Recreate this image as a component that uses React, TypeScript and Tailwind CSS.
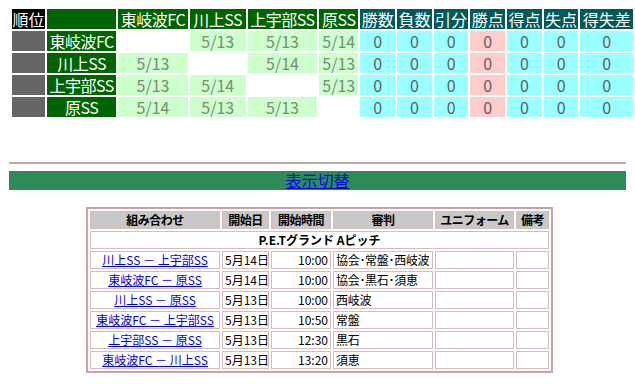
import React from 'react';

const TEAMS = ["東岐波FC", "川上SS", "上宇部SS", "原SS"];

// 対戦日 (行: チーム, 列: 相手)
const DATES: (string | null)[][] = [
  [null, "5/13", "5/13", "5/14"],
  ["5/13", null, "5/14", "5/13"],
  ["5/13", "5/14", null, "5/13"],
  ["5/14", "5/13", "5/13", null],
];

const TEAM_W = ["w-[70px]", "w-[57px]", "w-[70px]", "w-[40px]"];
const STATS = ["勝数", "負数", "引分", "勝点", "得点", "失点", "得失差"];

const MATCHES = [
  { card: "川上SS － 上宇部SS", date: "5月14日", time: "10:00", ref: "協会･常盤･西岐波" },
  { card: "東岐波FC － 原SS", date: "5月14日", time: "10:00", ref: "協会･黒石･須恵" },
  { card: "川上SS － 原SS", date: "5月13日", time: "10:00", ref: "西岐波" },
  { card: "東岐波FC － 上宇部SS", date: "5月13日", time: "10:50", ref: "常盤" },
  { card: "上宇部SS － 原SS", date: "5月13日", time: "12:30", ref: "黒石" },
  { card: "東岐波FC － 川上SS", date: "5月13日", time: "13:20", ref: "須恵" },
];

const cell = "border border-[#d8bcbc] h-[18px] p-0 px-[2px] text-[12px] leading-[16px] whitespace-nowrap overflow-hidden";
const head = `${cell} bg-[#c8c8c8] font-bold tracking-[-0.5px]`;

export default function App() {
  return (
    <div className="min-h-screen bg-white text-black font-['Noto_Sans_CJK_JP',sans-serif]">
      {/* 星取表 */}
      <table className="ml-[10px] mt-[7px] border-separate border-spacing-[2px] text-[16px] leading-[20px]">
        <thead>
          <tr className="h-[20px]">
            <th className="w-[35px] p-0 bg-black text-white font-normal">順位</th>
            <th className="w-[70px] p-0 bg-[#006400]"></th>
            {TEAMS.map((t, i) => (
              <th key={t} className={`${TEAM_W[i]} p-0 bg-[#006400] text-white font-normal whitespace-nowrap tracking-[-0.5px]`}>{t}</th>
            ))}
            {STATS.map(s => (
              <th key={s} className={`${s === "得失差" ? "w-[53px]" : "w-[35px]"} p-0 bg-[#005a5a] text-white font-normal whitespace-nowrap`}>{s}</th>
            ))}
          </tr>
        </thead>
        <tbody>
          {TEAMS.map((t, r) => (
            <tr key={t} className="h-[20px]">
              <td className="p-0 bg-[#666666]"></td>
              <td className="p-0 bg-[#006400] text-white text-center whitespace-nowrap tracking-[-0.5px]">{t}</td>
              {DATES[r].map((d, c) => (
                <td key={c} className={`p-0 text-center text-[#7a8a7a] ${d ? "bg-[#ccffcc]" : "bg-white"}`}>{d}</td>
              ))}
              {STATS.map(s => (
                <td key={s} className={`p-0 text-center text-[#606060] ${s === "勝点" ? "bg-[#ffcccc]" : "bg-[#99ffff]"}`}>0</td>
              ))}
            </tr>
          ))}
        </tbody>
      </table>

      <hr className="mx-[9px] mt-[43px] border-0 border-t-[2px] border-t-[#b4aca0]" />

      <div className="mx-[9px] mt-[7px] h-[19px] bg-[#2e8b57] text-center leading-[19px]">
        <a href="#" className="text-[16px] text-[#0000ee] underline">表示切替</a>
      </div>

      {/* 試合日程 */}
      <table className="mx-auto mt-[17px] w-[455px] table-fixed border-separate border-spacing-[2px] border-2 border-[#c8a4a4] relative left-[2px]">
        <colgroup>
          <col className="w-[130px]" />
          <col className="w-[47px]" />
          <col className="w-[60px]" />
          <col className="w-[100px]" />
          <col className="w-[79px]" />
          <col className="w-[33px]" />
        </colgroup>
        <thead>
          <tr>
            <th className={head}>組み合わせ</th>
            <th className={head}>開始日</th>
            <th className={head}>開始時間</th>
            <th className={head}>審判</th>
            <th className={head}>ユニフォーム</th>
            <th className={head}>備考</th>
          </tr>
        </thead>
        <tbody>
          <tr>
            <td colSpan={6} className={`${cell} text-center font-bold`}>P.E.Tグランド Aピッチ</td>
          </tr>
          {MATCHES.map((m, i) => (
            <tr key={i}>
              <td className={`${cell} text-center`}>
                <a href="#" className="text-[#0000ee] underline">{m.card}</a>
              </td>
              <td className={cell}>{m.date}</td>
              <td className={`${cell} text-right`}>{m.time}</td>
              <td className={`${cell} tracking-[-0.3px]`}>{m.ref}</td>
              <td className={cell}></td>
              <td className={cell}></td>
            </tr>
          ))}
        </tbody>
      </table>
    </div>
  );
}
